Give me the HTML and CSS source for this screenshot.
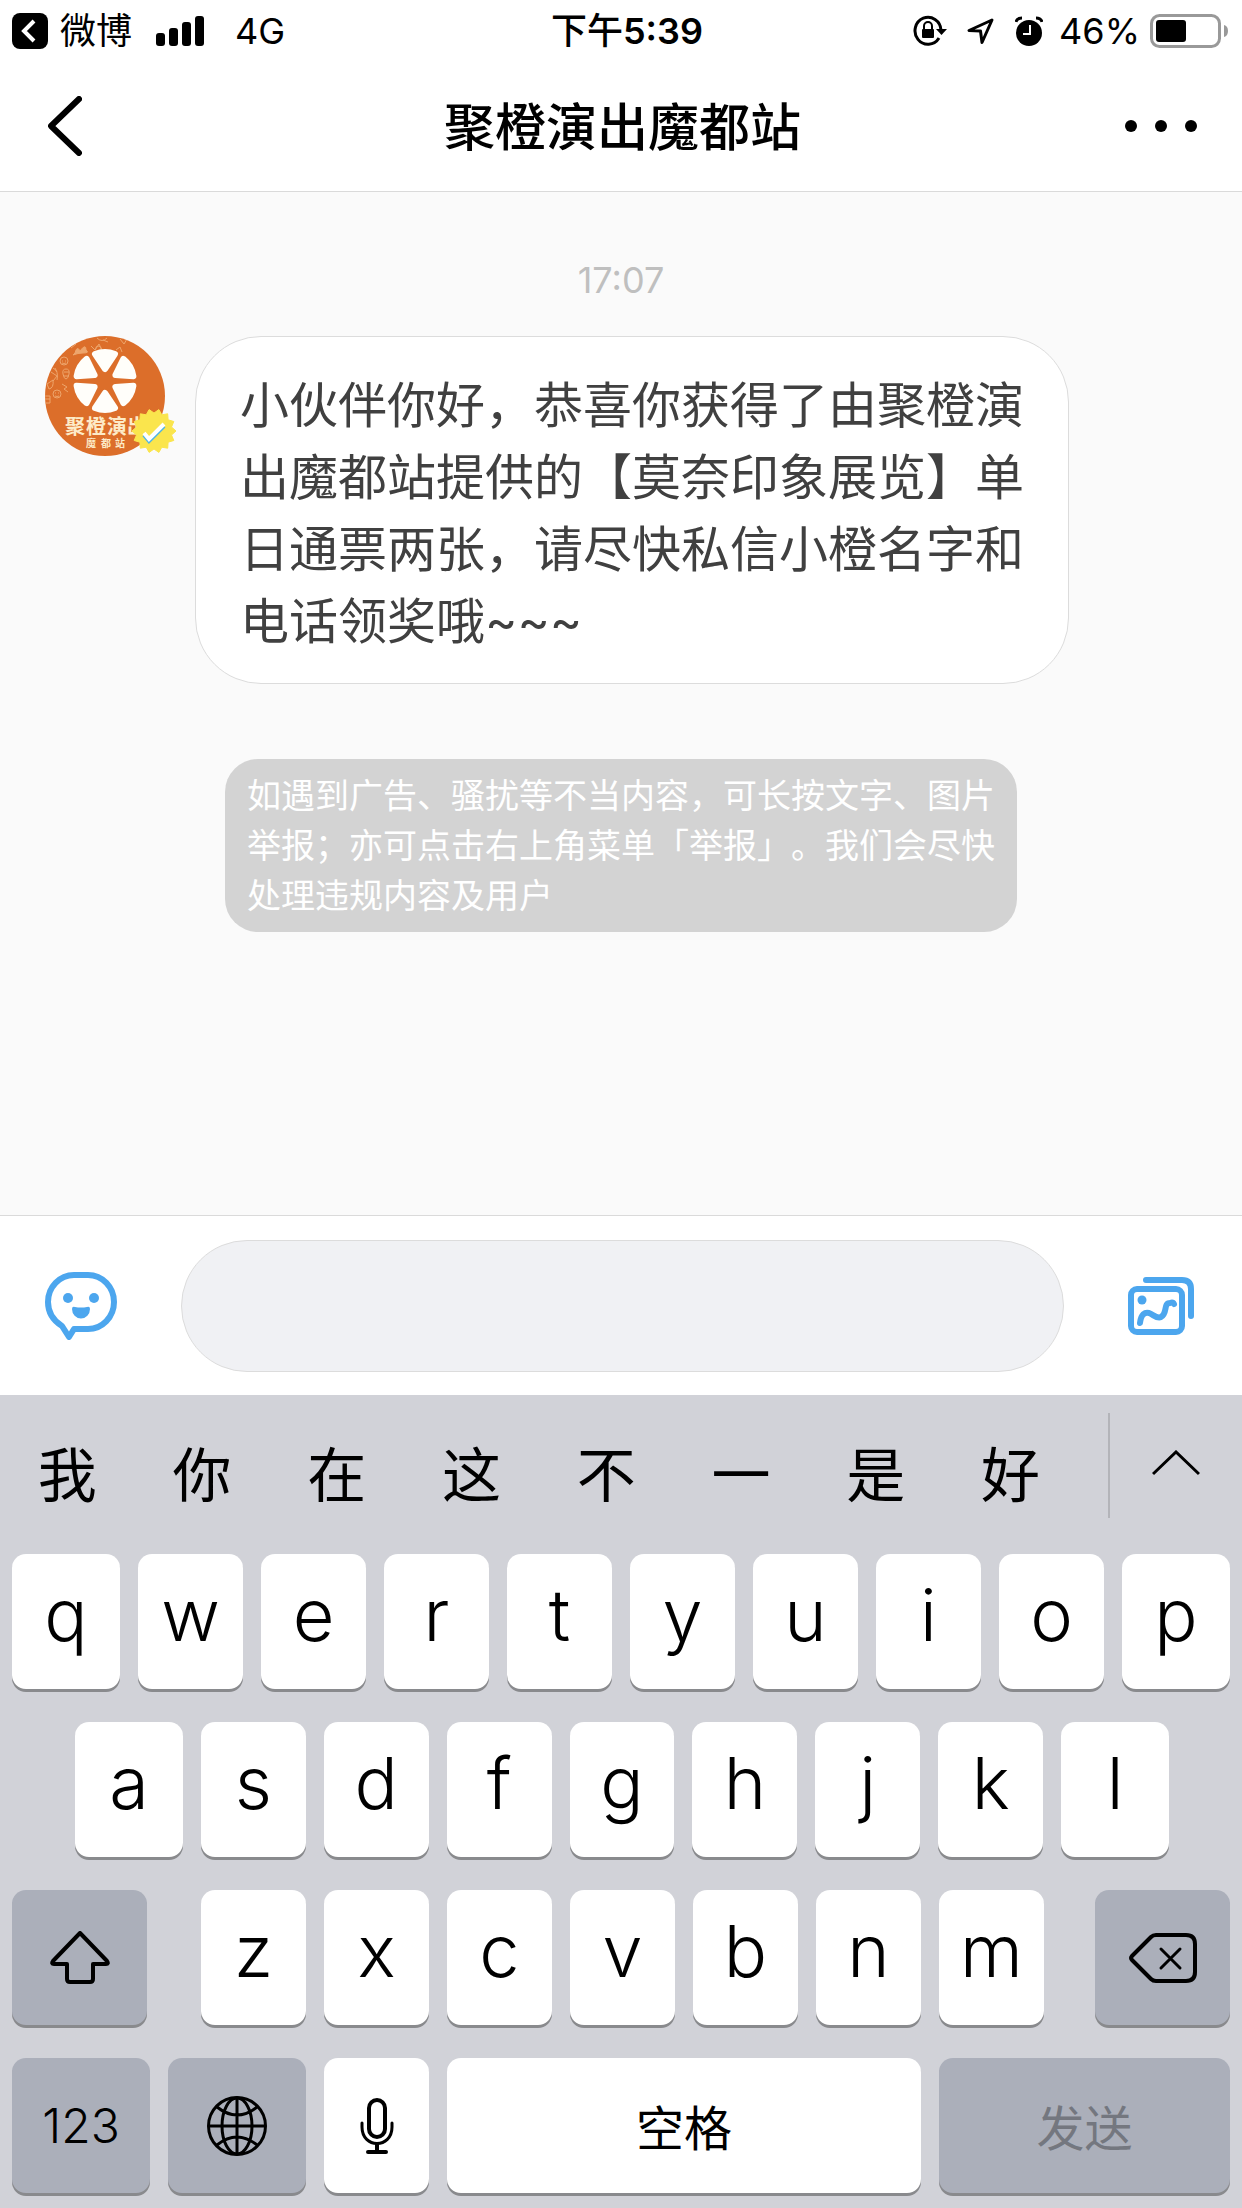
FILE: index.html
```
<!DOCTYPE html>
<html lang="zh-CN">

<head>
    <meta charset="UTF-8">
    <meta name="viewport" content="width=device-width, initial-scale=1.0">
    <title>聚橙演出魔都站</title>
    <link rel="stylesheet" href="styles.css">
</head>

<body>
    <div class="status-bar">
        <div class="status-left">
            <a class="back-app" href="#">
                <svg width="36" height="36" viewBox="0 0 36 36" aria-hidden="true">
                    <rect width="36" height="36" rx="8" />
                    <path d="M22 8L12 18L22 28" fill="none" stroke="#fff" stroke-width="4" />
                </svg>
                微博
            </a>
            <svg class="signal" width="49" height="30" viewBox="0 0 49 30" aria-hidden="true">
                <rect x="0" y="17" width="9" height="13" rx="3" />
                <rect x="13" y="12" width="9" height="18" rx="3" />
                <rect x="26" y="6" width="9" height="24" rx="3" />
                <rect x="39" y="0" width="9" height="30" rx="3" />
            </svg>
            <span>4G</span>
        </div>
        <div class="status-time">下午<b>5:39</b></div>
        <div class="status-right">
            <svg width="34" height="32" viewBox="0 0 34 32" aria-hidden="true">
                <path d="M28 15A13 13.500 0 1 0 26 23" fill="none" stroke="#000" stroke-width="3" />
                <path d="M23 14H34L28.500 20Z" />
                <rect x="9" y="14" width="12" height="9" rx="1" />
                <path d="M11 15V11a4 4 0 0 1 8 0V15" fill="none" stroke="#000" stroke-width="2" />
            </svg>
            <svg width="28" height="28" viewBox="0 0 28 28" aria-hidden="true">
                <path d="M25 3L2 13.500L13.500 14L15 25.500Z" fill="none" stroke="#000" stroke-width="3" stroke-linejoin="round" />
            </svg>
            <svg width="28" height="30" viewBox="0 0 28 30" aria-hidden="true">
                <circle cx="14" cy="17" r="13" />
                <path d="M1 6Q2 2 7 2M27 6Q26 2 21 2" fill="none" stroke="#000" stroke-width="3" />
                <path d="M15 9V18H8" fill="none" stroke="#fff" stroke-width="2" />
            </svg>
            <span class="battery-text">46%</span>
            <svg width="78" height="34" viewBox="0 0 78 34" aria-hidden="true">
                <rect x="1.500" y="1.500" width="68" height="31" rx="8" fill="none" stroke="#999" stroke-width="3" />
                <rect x="6" y="6" width="30" height="22" rx="3" />
                <path d="M74 11Q78 12 78 17T74 23Z" fill="#999" />
            </svg>
        </div>
    </div>

    <header class="nav-bar">
        <button class="nav-back" type="button" aria-label="返回">
            <svg width="34" height="60" viewBox="0 0 34 60">
                <path d="M31 3L3 30L31 57" fill="none" stroke="#000" stroke-width="6" stroke-linecap="round" stroke-linejoin="round" />
            </svg>
        </button>
        <h1 class="nav-title">聚橙演出魔都站</h1>
        <button class="nav-more" type="button" aria-label="更多">
            <svg width="72" height="12" viewBox="0 0 72 12">
                <circle cx="6" cy="6" r="6" />
                <circle cx="36" cy="6" r="6" />
                <circle cx="66" cy="6" r="6" />
            </svg>
        </button>
    </header>

    <main class="chat-cont">
        <time class="chat-time">17:07</time>

        <div class="message-cont">
            <svg class="avatar" viewBox="0 0 132 120" role="img" aria-label="聚橙演出魔都站">
                <clipPath id="avatar_clip">
                    <circle cx="60" cy="60" r="60" />
                </clipPath>
                <g clip-path="url(#avatar_clip)">
                    <rect width="120" height="120" fill="#dc6e2a" />
                    <g fill="none" stroke="#eda56c" stroke-width="1">
                        <circle cx="19" cy="25" r="4" />
                        <path d="M17 25h1M20 25h1M17 27q2 1 4 0" />
                        <path d="M30 17q2-8 5-2q6-8 6-1q4 3-3 3q-5 0-10 2z" fill="#eda56c" />
                        <path d="M6 36l6 4l-4 5M8 32q6 3 4 12M12 36l-2-4" />
                        <path d="M18 38q-1-5 3-5t3 5t-3 5t-3-5M19 36h5M19 40h5" />
                        <circle cx="12" cy="58" r="4" />
                        <path d="M10 57h1M13 57h1M10 60q2 1 4 0" />
                        <path d="M2 48l6-4q1 8-4 9zM17 48l5 3l-3 2l4 3" />
                        <path d="M0 60h5v7H0M0 63h5M46 10l4 4l4-6l3 6M52 2q5 5 10 0M58 4l5 2M75 3l4 5l3-5" />
                        <path d="M50 14q1-5 4-4t2 5M71 14l4-3l2 5M26 12l5-4" />
                    </g>
                    <g transform="translate(60 45)" fill="#fffefa" stroke="#fffefa" stroke-width="6" stroke-linejoin="round">
                        <path d="M0-12L-10-27Q0-31 10-27Z" />
                        <path d="M0-12L-10-27Q0-31 10-27Z" transform="rotate(60)" />
                        <path d="M0-12L-10-27Q0-31 10-27Z" transform="rotate(120)" />
                        <path d="M0-12L-10-27Q0-31 10-27Z" transform="rotate(180)" />
                        <path d="M0-12L-10-27Q0-31 10-27Z" transform="rotate(240)" />
                        <path d="M0-12L-10-27Q0-31 10-27Z" transform="rotate(300)" />
                    </g>
                    <text class="avatar-name" x="20 41 62 82" y="98">聚橙演出</text>
                    <text class="avatar-sub" x="41 56 70" y="111">魔都站</text>
                </g>
                <g transform="translate(109 95)">
                    <polygon fill="#fae54d" stroke="#fae54d" stroke-linejoin="round" points="22,0 17.500,4 19.800,9.500 14.100,11.200 13.700,17.200 7.800,16.200 4.900,21.400 0,18 -4.900,21.400 -7.800,16.200 -13.700,17.200 -14.100,11.200 -19.800,9.500 -17.500,4 -22,0 -17.500,-4 -19.800,-9.500 -14.100,-11.200 -13.700,-17.200 -7.800,-16.200 -4.900,-21.400 0,-18 4.900,-21.400 7.800,-16.200 13.700,-17.200 14.100,-11.200 19.800,-9.500 17.500,-4" />
                    <path d="M-10 4L-5 10L10-5" fill="none" stroke="#4db4e4" stroke-width="4" />
                    <path d="M-10 2L-5 8L10-7" fill="none" stroke="#fff" stroke-width="4" />
                </g>
            </svg>
            <p class="message-content">小伙伴你好，恭喜你获得了由聚橙演出魔都站提供的【莫奈印象展览】单日通票两张，请尽快私信小橙名字和电话领奖哦~~~</p>
        </div>

        <p class="chat-notice">如遇到广告、骚扰等不当内容，可长按文字、图片举报；亦可点击右上角菜单「举报」。我们会尽快处理违规内容及用户</p>
    </main>

    <form class="compose">
        <button type="button" aria-label="表情">
            <svg width="72" height="68" viewBox="0 0 72 68">
                <path d="M29 57H43A26 27 0 0 0 69 30A26 27 0 0 0 43 3H29A26 27 0 0 0 3 30C3 41 9 49 17 54L24 65Z" fill="none" stroke="#4ca6ee" stroke-width="6" stroke-linejoin="round" />
                <circle cx="23" cy="26" r="5" fill="#4ca6ee" />
                <circle cx="49" cy="26" r="5" fill="#4ca6ee" />
                <path d="M27 37Q27 34 30 35Q36 36 42 35Q45 34 45 37A9 9.500 0 0 1 27 37Z" fill="#4ca6ee" />
            </svg>
        </button>
        <input class="compose-input" type="text" aria-label="消息">
        <button type="button" aria-label="图片">
            <svg width="66" height="58" viewBox="0 0 66 58">
                <g fill="none" stroke="#4ca6ee" stroke-width="6" stroke-linecap="round">
                    <rect x="3" y="12" width="51" height="43" rx="6" />
                    <path d="M18 3H54Q63 3 63 12V39" />
                    <path d="M12 46C13 37 17 35 21 36C26 38 29 42 33 40C40 36 35 26 42 26Q45 25 46 27" />
                </g>
                <circle cx="14" cy="23" r="4.500" fill="#4ca6ee" />
            </svg>
        </button>
    </form>

    <section class="keyboard" aria-label="键盘">
        <div class="candidates">
            <div class="candidate-list">
                <button type="button">我</button>
                <button type="button">你</button>
                <button type="button">在</button>
                <button type="button">这</button>
                <button type="button">不</button>
                <button type="button">一</button>
                <button type="button">是</button>
                <button type="button">好</button>
            </div>
            <button class="candidate-more" type="button" aria-label="展开">
                <svg width="48" height="26" viewBox="0 0 48 26">
                    <path d="M1 24L24 2L47 24" fill="none" stroke="#000" stroke-width="3" />
                </svg>
            </button>
        </div>

        <div class="key-row">
            <button class="key key-edge" type="button">q</button>
            <button class="key" type="button">w</button>
            <button class="key" type="button">e</button>
            <button class="key" type="button">r</button>
            <button class="key" type="button">t</button>
            <button class="key" type="button">y</button>
            <button class="key" type="button">u</button>
            <button class="key" type="button">i</button>
            <button class="key" type="button">o</button>
            <button class="key key-edge" type="button">p</button>
        </div>
        <div class="key-row key-row-inset">
            <button class="key key-edge" type="button">a</button>
            <button class="key" type="button">s</button>
            <button class="key" type="button">d</button>
            <button class="key" type="button">f</button>
            <button class="key" type="button">g</button>
            <button class="key" type="button">h</button>
            <button class="key" type="button">j</button>
            <button class="key" type="button">k</button>
            <button class="key key-edge" type="button">l</button>
        </div>
        <div class="key-row">
            <button class="key key-dark key-icon key-shift" type="button" aria-label="大写">
                <svg width="60" height="53" viewBox="0 0 60 53">
                    <path d="M30 2L3 30Q1 33 4 33H17V48Q17 51 20 51H40Q43 51 43 48V33H56Q59 33 57 30Z" fill="none" stroke="#000" stroke-width="4" stroke-linejoin="round" />
                </svg>
            </button>
            <button class="key" type="button">z</button>
            <button class="key" type="button">x</button>
            <button class="key" type="button">c</button>
            <button class="key" type="button">v</button>
            <button class="key" type="button">b</button>
            <button class="key" type="button">n</button>
            <button class="key" type="button">m</button>
            <button class="key key-dark key-icon key-delete" type="button" aria-label="删除">
                <svg width="68" height="50" viewBox="0 0 68 50">
                    <g fill="none" stroke="#000" stroke-width="4" stroke-linecap="round" stroke-linejoin="round">
                        <path d="M3 27Q1 25 3 23L22 4Q24 2 27 2H57Q66 2 66 11V39Q66 48 57 48H27Q24 48 22 46Z" />
                        <path d="M32 16L51 35M51 16L32 35" stroke-width="3" />
                    </g>
                </svg>
            </button>
        </div>
        <div class="key-row">
            <button class="key key-dark key-wide key-text" type="button">123</button>
            <button class="key key-dark key-wide key-icon" type="button" aria-label="切换键盘">
                <svg width="60" height="60" viewBox="0 0 60 60">
                    <g fill="none" stroke="#000" stroke-width="3">
                        <circle cx="30" cy="30" r="28.500" />
                        <ellipse cx="30" cy="30" rx="15" ry="28" />
                        <path d="M30 2V58M2 30H58M10 11Q30 27 50 11M10 49Q30 33 50 49" />
                    </g>
                </svg>
            </button>
            <button class="key key-icon" type="button" aria-label="语音">
                <svg width="34" height="56" viewBox="0 0 34 56">
                    <g fill="none" stroke="#000" stroke-width="4" stroke-linecap="round">
                        <rect x="9" y="2" width="16" height="37" rx="8" />
                        <path d="M2 25V29C2 51 32 51 32 29V25" stroke-width="3" />
                        <path d="M17 46V54M8 54H26" />
                    </g>
                </svg>
            </button>
            <button class="key key-space key-text key-cjk" type="button">空格</button>
            <button class="key key-dark key-send key-text key-cjk" type="button" disabled>发送</button>
        </div>
    </section>
</body>

</html>
```
FILE: styles.css
```
* {
    box-sizing: border-box;
}

body {
    margin: 0;
    min-height: 100vh;
    display: flex;
    flex-direction: column;
    background-color: #ffffff;
    color: #000000;
    font-family: Inter, "Noto Sans CJK SC", sans-serif;
    font-size: 36px;
    text-spacing-trim: space-all;
}

button {
    padding: 0;
    border: none;
    background: none;
    color: inherit;
    font: inherit;
    cursor: pointer;
}

svg {
    display: block;
    flex-shrink: 0;
}

/* status bar */
.status-bar {
    height: 60px;
    padding: 2px 14px 0 12px;
    display: grid;
    grid-template-columns: 1fr auto 1fr;
    align-items: center;
    line-height: 44px;
}

.status-left,
.status-right,
.back-app {
    display: flex;
    align-items: center;
}

.back-app {
    gap: 12px;
    color: inherit;
    text-decoration: none;
}

.signal {
    margin: 0 30px 0 24px;
}

.status-time {
    padding-left: 14px;
    font-weight: 500;
}

.status-time b {
    font-weight: 600;
}

.status-right {
    justify-content: flex-end;
    gap: 20px;
}

.battery-text {
    margin: 0 -10px 0 -4px;
}

/* title bar */
.nav-bar {
    height: 132px;
    padding: 0 45px 0 48px;
    display: grid;
    grid-template-columns: 1fr auto 1fr;
    align-items: center;
    border-bottom: 1px solid #dadada;
}

.nav-back {
    justify-self: start;
}

.nav-more {
    justify-self: end;
}

.nav-title {
    margin: 0;
    padding-top: 4px;
    font-size: 51px;
    font-weight: 500;
    line-height: 72px;
}

/* conversation */
.chat-cont {
    flex-grow: 1;
    padding: 64px 45px;
    background-color: #fafafa;
    display: flex;
    flex-direction: column;
    align-items: center;
}

.chat-time {
    color: #bfbfbf;
    line-height: 48px;
}

.message-cont {
    width: 100%;
    margin: 32px 0 75px;
    display: flex;
    align-items: flex-start;
    gap: 18px;
}

.avatar {
    width: 132px;
    height: 120px;
}

.avatar-name {
    fill: #fdebc8;
    font-size: 20px;
    font-weight: 700;
}

.avatar-sub {
    fill: #fdebc8;
    font-size: 10px;
    font-weight: 700;
}

.message-content {
    max-width: 874px;
    margin: 0;
    padding: 33px 44px 25px;
    background-color: #ffffff;
    border: 1px solid #dcdcdc;
    border-radius: 66px;
    color: #404040;
    font-size: 49px;
    line-height: 72px;
}

.chat-notice {
    max-width: 792px;
    margin: 0;
    padding: 12px 22px 11px;
    background-color: #d3d3d3;
    border-radius: 33px;
    color: #ffffff;
    font-size: 34px;
    line-height: 50px;
}

/* message box */
.compose {
    height: 180px;
    padding: 0 48px 0 45px;
    display: flex;
    align-items: center;
    gap: 64px;
    border-top: 1px solid #dadada;
}

.compose-input {
    flex: 1;
    min-width: 0;
    height: 132px;
    padding: 0 54px;
    background-color: #f0f1f4;
    border: 1px solid #dcdcdc;
    border-radius: 66px;
    font: inherit;
    font-size: 49px;
    outline: none;
}

/* keyboard */
.keyboard {
    padding: 0 12px 15px;
    background-color: #d1d2d8;
    display: flex;
    flex-direction: column;
    gap: 33px;
}

.candidates {
    height: 126px;
    margin: 0 -12px;
    padding-top: 18px;
    display: flex;
}

.candidate-list {
    flex: 1;
    padding-right: 30px;
    display: flex;
    border-right: 2px solid #b3b4b9;
    height: 105px;
}

.candidate-list button {
    flex: 1;
    padding-top: 21px;
    font-size: 59px;
    line-height: 84px;
}

.candidate-more {
    width: 132px;
    height: 100px;
    display: flex;
    align-items: center;
    justify-content: center;
}

.key-row {
    display: flex;
    gap: 18px;
}

.key-row-inset {
    padding: 0 61px 0 63px;
}

.key {
    flex: 105 1 0;
    min-width: 0;
    height: 135px;
    padding-bottom: 14px;
    display: flex;
    align-items: center;
    justify-content: center;
    background-color: #ffffff;
    border-radius: 14px;
    box-shadow: 0 3px 0 #898a8d;
    font-size: 72px;
    font-weight: 350;
    line-height: 88px;
}

.key-edge {
    flex-grow: 108;
}

.key-dark {
    background-color: #abafba;
}

.key-icon {
    padding-bottom: 0;
}

.key-text {
    padding-bottom: 0;
    font-size: 48px;
}

.key-cjk {
    padding-top: 6px;
    font-weight: 400;
}

.key-shift {
    flex-grow: 135;
    margin-right: 36px;
}

.key-delete {
    flex-grow: 135;
    margin-left: 33px;
}

.key-wide {
    flex-grow: 138;
}

.key-space {
    flex-grow: 474;
}

.key-send {
    flex-grow: 291;
    color: #74777f;
}
```
